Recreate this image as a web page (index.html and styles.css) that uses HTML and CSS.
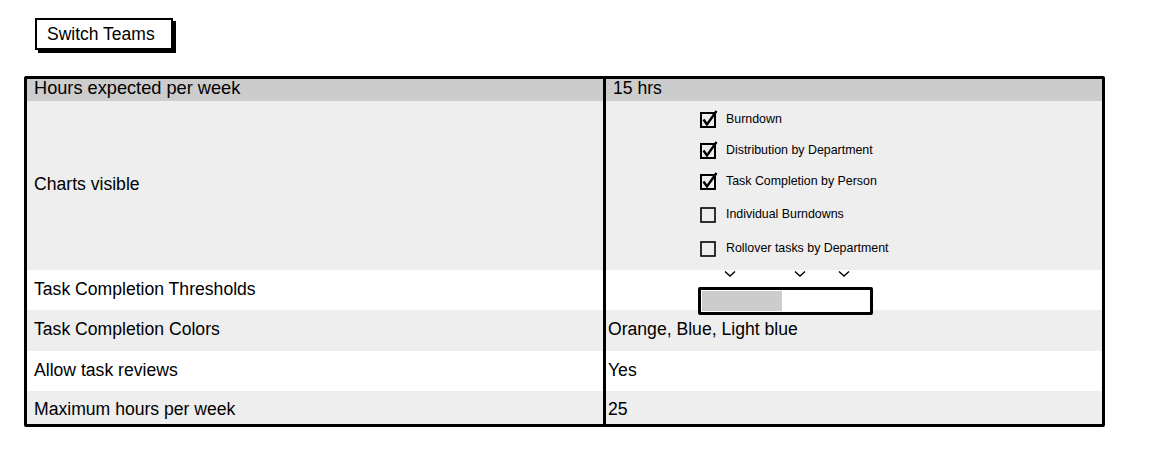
FILE: index.html
```html
<!DOCTYPE html>
<html>
<head>
<meta charset="utf-8">
<link rel="stylesheet" href="styles.css">
</head>
<body>
<div class="page">
  <div class="btn-row"><button class="btn">Switch Teams</button></div>
  <div class="table">
    <div class="cell left head big">Hours expected per week</div>
    <div class="cell right head pad">15 hrs</div>

    <div class="cell left grey">Charts visible</div>
    <div class="cell right grey charts">
      <ul class="checks">
        <li class="check r1"><svg class="cb" width="20" height="20" viewBox="0 0 20 20"><rect x="2" y="4" width="14" height="14" fill="none" stroke="#000" stroke-width="2"/><path d="M4.5 10.5 L8 15.5 L17.5 2" fill="none" stroke="#000" stroke-width="2.4"/></svg><span>Burndown</span></li>
        <li class="check r2"><svg class="cb" width="20" height="20" viewBox="0 0 20 20"><rect x="2" y="4" width="14" height="14" fill="none" stroke="#000" stroke-width="2"/><path d="M4.5 10.5 L8 15.5 L17.5 2" fill="none" stroke="#000" stroke-width="2.4"/></svg><span>Distribution by Department</span></li>
        <li class="check r3"><svg class="cb" width="20" height="20" viewBox="0 0 20 20"><rect x="2" y="4" width="14" height="14" fill="none" stroke="#000" stroke-width="2"/><path d="M4.5 10.5 L8 15.5 L17.5 2" fill="none" stroke="#000" stroke-width="2.4"/></svg><span>Task Completion by Person</span></li>
        <li class="check r4"><svg class="cb" width="20" height="20" viewBox="0 0 20 20"><rect x="2" y="4" width="14" height="14" fill="none" stroke="#000" stroke-width="1.6"/></svg><span>Individual Burndowns</span></li>
        <li class="check r5"><svg class="cb" width="20" height="20" viewBox="0 0 20 20"><rect x="2" y="4" width="14" height="14" fill="none" stroke="#000" stroke-width="1.6"/></svg><span>Rollover tasks by Department</span></li>
      </ul>
    </div>

    <div class="cell left white">Task Completion Thresholds</div>
    <div class="cell right white thresholds">
      <div class="slider">
        <svg class="chev" style="left:26px" width="12" height="8" viewBox="0 0 12 8"><path d="M1 1.5 L6 6 L11 1.5" fill="none" stroke="#000" stroke-width="1.4"/></svg>
        <svg class="chev" style="left:96px" width="12" height="8" viewBox="0 0 12 8"><path d="M1 1.5 L6 6 L11 1.5" fill="none" stroke="#000" stroke-width="1.4"/></svg>
        <svg class="chev" style="left:140px" width="12" height="8" viewBox="0 0 12 8"><path d="M1 1.5 L6 6 L11 1.5" fill="none" stroke="#000" stroke-width="1.4"/></svg>
        <div class="bar"><div class="fill" style="width:80px"></div></div>
      </div>
    </div>

    <div class="cell left grey">Task Completion Colors</div>
    <div class="cell right grey">Orange, Blue, Light blue</div>

    <div class="cell left white">Allow task reviews</div>
    <div class="cell right white">Yes</div>

    <div class="cell left grey last">Maximum hours per week</div>
    <div class="cell right grey last">25</div>
  </div>
</div>
</body>
</html>
```

FILE: styles.css
```css
html, body {
  margin: 0;
  padding: 0;
  background: #ffffff;
}
body {
  font-family: "Liberation Sans", Arial, sans-serif;
  color: #000;
}
.page {
  padding: 18px 0 0 24px;
}
.btn-row {
  padding-left: 11px;
  height: 58px;
}
.btn {
  font-family: "Liberation Sans", Arial, sans-serif;
  font-size: 17.5px;
  background: #fff;
  border: 2px solid #000;
  box-shadow: 3px 3px 0 #000;
  padding: 0 10px;
  height: 32px;
  width: 138px;
  text-align: left;
  color: #000;
  cursor: default;
  white-space: nowrap;
}
.table {
  width: 1075px;
  border: 3px solid #000;
  border-radius: 2px;
  display: grid;
  grid-template-columns: 579px 496px;
  grid-template-rows: 22px 169px 40px 41px 40px 33px;
}
.cell {
  display: flex;
  align-items: center;
  font-size: 17.6px;
  min-width: 0;
  white-space: nowrap;
  padding-bottom: 2px;
}
.cell.head {
  padding-bottom: 3px;
}
.cell.big {
  font-size: 18.2px;
}
.cell.last {
  padding-top: 4px;
  padding-bottom: 0;
}
.left {
  padding-left: 7px;
  border-right: 3px solid #000;
}
.right {
  padding-left: 2px;
}
.right.pad {
  padding-left: 7px;
}
.head {
  background: #cccccc;
}
.grey {
  background: #eeeeee;
}
.white {
  background: #ffffff;
}
.charts {
  align-items: flex-start;
}
.checks {
  list-style: none;
  margin: 0;
  padding: 8px 0 0 91px;
  display: flex;
  flex-direction: column;
}
.check {
  display: flex;
  align-items: center;
  height: 20px;
  font-size: 12.4px;
  gap: 7px;
}
.check + .check {
  margin-top: 11px;
}
.check.r4 {
  margin-top: 13px;
}
.check.r5 {
  margin-top: 14px;
}
.cb {
  display: block;
  flex: none;
}
.thresholds {
  align-items: flex-start;
  overflow: visible;
  padding-bottom: 0;
}
.slider {
  position: relative;
  margin-left: 90px;
  padding-top: 17px;
}
.chev {
  position: absolute;
  top: 0;
}
.bar {
  width: 168px;
  height: 20px;
  border: 3px solid #000;
  border-radius: 2px;
  background: #fff;
  display: flex;
  padding: 1px 0 1px 1px;
  box-sizing: content-box;
}
.fill {
  background: #cccccc;
  height: 100%;
}
```
